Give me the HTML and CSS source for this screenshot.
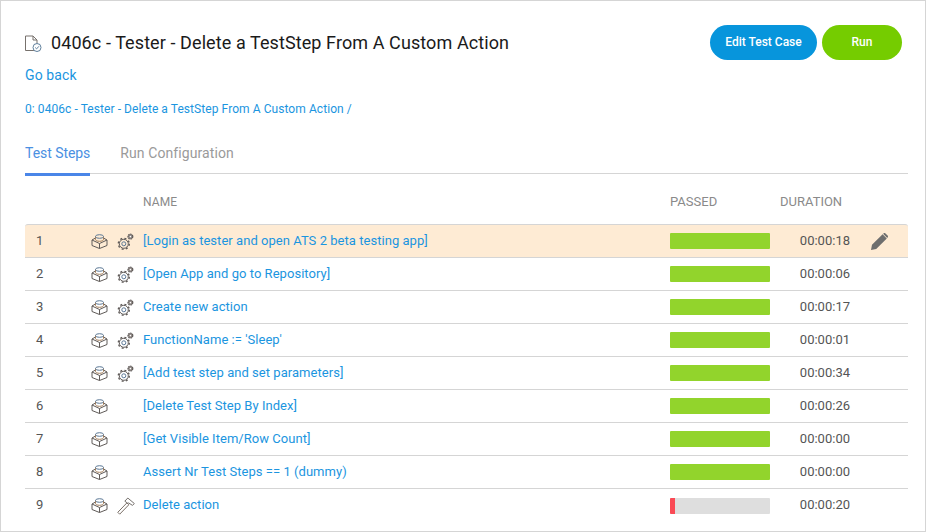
FILE: index.html
```html
<!DOCTYPE html>
<html lang="en">
<head>
<meta charset="utf-8">
<title>Test Case</title>
<link rel="stylesheet" href="styles.css">
</head>
<body>
<svg class="defs" width="0" height="0" aria-hidden="true">
  <defs>
    <symbol id="brick" viewBox="0 0 17 15">
      <g fill="none" stroke="#5f5a58" stroke-width="1" stroke-linejoin="round">
        <path d="M4.500 4 1 6v5.500l7.500 3 7.500-3V6l-3.500-2"/>
        <path d="M1 6l7.500 3.500L16 6M8.500 9.500v5"/>
        <path d="M4.500 2.500v3c0 1 1.800 1.800 4 1.800s4-.8 4-1.800v-3" stroke="#a5805c"/>
        <ellipse cx="8.500" cy="2.500" rx="4" ry="1.800" stroke="#5b7896"/>
      </g>
    </symbol>
    <symbol id="gears" viewBox="0 0 17 17">
      <g fill="none" stroke="#5f5a58">
        <circle cx="6.800" cy="10.800" r="5.500" stroke-width="1.400" stroke-dasharray="2 2.320"/>
        <circle cx="6.800" cy="10.800" r="4.500" stroke-width="1"/>
        <circle cx="6.800" cy="10.800" r="2" stroke="#5b7896" stroke-width="1"/>
      </g>
      <circle cx="13.400" cy="3.600" r="2.400" fill="#8d8683" stroke="#5f5a58" stroke-width="1.200" stroke-dasharray="1.400 .6"/>
      <circle cx="13.400" cy="3.600" r=".8" fill="#fff"/>
    </symbol>
    <symbol id="hammer" viewBox="0 0 18 18">
      <g fill="none" stroke="#5f5a58" stroke-width="1" stroke-linejoin="round">
        <path d="M.8 15.300 2.700 17.200 11.800 7.800 9.900 5.900z" stroke="#7a6f66"/>
        <path d="M7.800 4.200 10.800 1l6.500 5.500-1.800 1.900-3.700-2.400-1.200.2z" stroke="#77726e"/>
      </g>
    </symbol>
  </defs>
</svg>
<main class="page">
  <header class="top">
    <div class="heading">
      <h1 class="title">
        <svg class="doc-icon" viewBox="0 0 17 17" width="17" height="17" aria-hidden="true">
          <path d="M9 15.500H.5V1h7.500l4 4v3.500M8 1v4h4" fill="none" stroke="#77716c"/>
          <circle cx="12" cy="12.500" r="4" fill="#fff" stroke="#5f7f9c"/>
          <path d="M10.200 12.500l1.400 1.400 2.300-2.600" fill="none" stroke="#5f7f9c"/>
        </svg>
        <span>0406c - Tester - Delete a TestStep From A Custom Action</span>
      </h1>
      <a class="back" href="#">Go back</a>
    </div>
    <div class="actions">
      <a class="btn btn-edit" href="#">Edit Test Case</a>
      <a class="btn btn-run" href="#">Run</a>
    </div>
  </header>
  <p class="crumb"><a href="#">0: 0406c - Tester - Delete a TestStep From A Custom Action</a> /</p>
  <nav class="tabs">
    <a class="tab tab-active" href="#">Test Steps</a>
    <a class="tab" href="#">Run Configuration</a>
  </nav>
  <div class="thead">
    <span class="c-name">NAME</span>
    <span class="c-passed">PASSED</span>
    <span class="c-dur">DURATION</span>
  </div>
  <div class="rows">
    <div class="row row-hl">
      <span class="c-num">1</span>
      <span class="c-icons"><svg class="i-brick"><use href="#brick"/></svg><svg class="i-gears"><use href="#gears"/></svg></span>
      <a class="c-name" href="#">[Login as tester and open ATS 2 beta testing app]</a>
      <span class="bar"><i class="fill" style="width:100%"></i></span>
      <span class="c-time">00:00:18</span>
      <svg class="pencil" viewBox="0 0 17 17" width="17" height="17" aria-hidden="true"><path d="M0 17l1-5.200L11.600 1.200l4.200 4.200L5.200 16zM12.500.4c.6-.6 1.400-.6 2 0l2.100 2.100c.6.600.6 1.400 0 2l-.4.400L12.100.8z" fill="#6e6e6e"/></svg>
    </div>
    <div class="row">
      <span class="c-num">2</span>
      <span class="c-icons"><svg class="i-brick"><use href="#brick"/></svg><svg class="i-gears"><use href="#gears"/></svg></span>
      <a class="c-name" href="#">[Open App and go to Repository]</a>
      <span class="bar"><i class="fill" style="width:100%"></i></span>
      <span class="c-time">00:00:06</span>
    </div>
    <div class="row">
      <span class="c-num">3</span>
      <span class="c-icons"><svg class="i-brick"><use href="#brick"/></svg><svg class="i-gears"><use href="#gears"/></svg></span>
      <a class="c-name" href="#">Create new action</a>
      <span class="bar"><i class="fill" style="width:100%"></i></span>
      <span class="c-time">00:00:17</span>
    </div>
    <div class="row">
      <span class="c-num">4</span>
      <span class="c-icons"><svg class="i-brick"><use href="#brick"/></svg><svg class="i-gears"><use href="#gears"/></svg></span>
      <a class="c-name" href="#">FunctionName := 'Sleep'</a>
      <span class="bar"><i class="fill" style="width:100%"></i></span>
      <span class="c-time">00:00:01</span>
    </div>
    <div class="row">
      <span class="c-num">5</span>
      <span class="c-icons"><svg class="i-brick"><use href="#brick"/></svg><svg class="i-gears"><use href="#gears"/></svg></span>
      <a class="c-name" href="#">[Add test step and set parameters]</a>
      <span class="bar"><i class="fill" style="width:100%"></i></span>
      <span class="c-time">00:00:34</span>
    </div>
    <div class="row">
      <span class="c-num">6</span>
      <span class="c-icons"><svg class="i-brick"><use href="#brick"/></svg></span>
      <a class="c-name" href="#">[Delete Test Step By Index]</a>
      <span class="bar"><i class="fill" style="width:100%"></i></span>
      <span class="c-time">00:00:26</span>
    </div>
    <div class="row">
      <span class="c-num">7</span>
      <span class="c-icons"><svg class="i-brick"><use href="#brick"/></svg></span>
      <a class="c-name" href="#">[Get Visible Item/Row Count]</a>
      <span class="bar"><i class="fill" style="width:100%"></i></span>
      <span class="c-time">00:00:00</span>
    </div>
    <div class="row">
      <span class="c-num">8</span>
      <span class="c-icons"><svg class="i-brick"><use href="#brick"/></svg></span>
      <a class="c-name" href="#">Assert Nr Test Steps == 1 (dummy)</a>
      <span class="bar"><i class="fill" style="width:100%"></i></span>
      <span class="c-time">00:00:00</span>
    </div>
    <div class="row row-last">
      <span class="c-num">9</span>
      <span class="c-icons"><svg class="i-brick"><use href="#brick"/></svg><svg class="i-hammer"><use href="#hammer"/></svg></span>
      <a class="c-name" href="#">Delete action</a>
      <span class="bar"><i class="fill fill-fail" style="width:5%"></i></span>
      <span class="c-time">00:00:20</span>
    </div>
  </div>
</main>
</body>
</html>
```
FILE: styles.css
```css
* { box-sizing: border-box; }
html, body { margin: 0; height: 100%; }
body {
  width: 926px;
  height: 532px;
  overflow: hidden;
  background: #fff;
  font-family: Roboto, "Liberation Sans", sans-serif;
  color: #555;
}
a { color: #1b95e0; text-decoration: none; }
.defs { position: absolute; }
.page {
  width: 926px;
  height: 532px;
  border: 1px solid #d5d5d5;
  padding: 24px 18px 0 24px;
}
.top { display: flex; justify-content: space-between; align-items: flex-start; }
.title {
  display: flex;
  align-items: center;
  gap: 9px;
  margin: 6px 0 0;
  font-size: 18px;
  line-height: 24px;
  font-weight: 400;
  letter-spacing: .09px;
  color: #1a1a1a;
}
.doc-icon { flex: none; }
.back { display: block; margin-top: 11px; font-size: 14px; line-height: 18px; letter-spacing: .1px; }
.actions { display: flex; gap: 5px; margin-right: 5px; }
.btn {
  display: block;
  height: 35px;
  line-height: 35px;
  border-radius: 18px;
  color: #fff;
  font-size: 12px;
  font-weight: 500;
  text-align: center;
}
.btn-edit { width: 107px; background: #0795dc; }
.btn-run { width: 80px; background: #75cc00; }
.crumb { margin: 17px 0 0; font-size: 12px; line-height: 16px; letter-spacing: .07px; color: #1b95e0; }
.tabs {
  display: flex;
  gap: 30px;
  margin-top: 27px;
  height: 30px;
  width: 883px;
  border-bottom: 1px solid #d5d5d5;
}
.tab { height: 30px; font-size: 14px; line-height: 18px; color: #9a9a9a; letter-spacing: .09px; }
.tab-active { color: #4a90e2; letter-spacing: -.05px; height: 32px; border-bottom: 3px solid #4a86e8; }
.thead {
  height: 50px;
  width: 883px;
  font-size: 13px;
  line-height: 16px;
  padding-top: 20px;
  color: #8a8a8a;
  display: flex;
}
.thead .c-name { width: 527px; margin-left: 118px; font-size: 12px; letter-spacing: .1px; }
.thead .c-passed { width: 110px; }
.rows { width: 883px; }
.row {
  display: flex;
  align-items: center;
  height: 33px;
  border-bottom: 1px solid #d5d5d5;
  font-size: 13px;
}
.row-hl {
  background: #feebd4;
  border-top: 1px solid #d5d5d5;
  border-radius: 3px 3px 0 0;
  height: 34px;
}
.row-last { border-bottom: 0; }
.c-num { width: 66px; padding-left: 11px; padding-bottom: 2px; color: #555; }
.c-icons { width: 52px; display: flex; align-items: center; }
.i-brick { width: 17px; height: 15px; margin-right: 9px; flex: none; }
.i-gears { width: 17px; height: 17px; flex: none; }
.i-hammer { width: 18px; height: 18px; flex: none; }
.row .c-name { width: 527px; padding-bottom: 2px; letter-spacing: .04px; color: #1b95e0; }
.bar { display: block; width: 100px; height: 16px; background: #dedede; border-radius: 1px; overflow: hidden; flex: none; }
.fill { display: block; height: 16px; background: #92d42c; }
.fill-fail { background: #fa4a55; }
.c-time { width: 80px; padding-bottom: 2px; text-align: right; color: #555; flex: none; }
.pencil { margin-left: 21px; flex: none; }
```
